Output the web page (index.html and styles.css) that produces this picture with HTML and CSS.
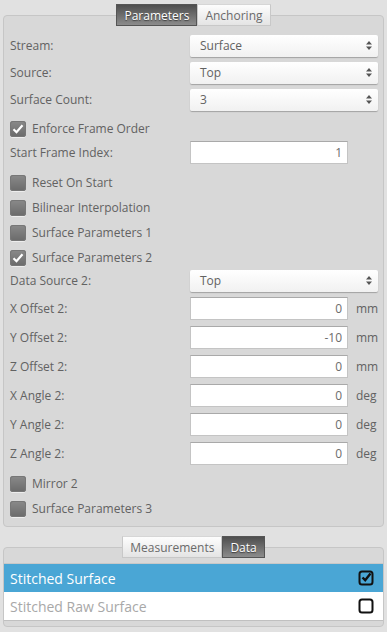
FILE: index.html
```html
<!DOCTYPE html>
<html lang="en">
<head>
    <meta charset="UTF-8">
    <meta name="viewport" content="width=device-width, initial-scale=1.0">
    <title>Stitch Tool</title>
    <link rel="stylesheet" href="styles.css">
</head>
<body>
    <div class="panel params">
        <div class="tabs">
            <span class="tab active">Parameters</span>
            <span class="tab">Anchoring</span>
        </div>

        <div class="row sel-row">
            <span class="label">Stream:</span>
            <div class="select"><span>Surface</span><svg class="arrows" width="6" height="9" viewBox="0 0 6 9"><path d="M3 0 L6 3.5 H0 Z M0 5.5 H6 L3 9 Z" fill="#555"/></svg></div>
        </div>
        <div class="row sel-row">
            <span class="label">Source:</span>
            <div class="select"><span>Top</span><svg class="arrows" width="6" height="9" viewBox="0 0 6 9"><path d="M3 0 L6 3.5 H0 Z M0 5.5 H6 L3 9 Z" fill="#555"/></svg></div>
        </div>
        <div class="row sel-row">
            <span class="label">Surface Count:</span>
            <div class="select"><span>3</span><svg class="arrows" width="6" height="9" viewBox="0 0 6 9"><path d="M3 0 L6 3.5 H0 Z M0 5.5 H6 L3 9 Z" fill="#555"/></svg></div>
        </div>

        <div class="row chk-row">
            <span class="box"><svg width="16" height="16" viewBox="0 0 16 16"><path d="M3.5 8.2 L6.5 11.2 L12.5 4.2" fill="none" stroke="#fff" stroke-width="2.2"/></svg></span>
            <span class="chk-label">Enforce Frame Order</span>
        </div>

        <div class="row in-row">
            <span class="label">Start Frame Index:</span>
            <input class="field" type="text" value="1">
        </div>

        <div class="row chk-row">
            <span class="box"></span>
            <span class="chk-label">Reset On Start</span>
        </div>
        <div class="row chk-row">
            <span class="box"></span>
            <span class="chk-label">Bilinear Interpolation</span>
        </div>
        <div class="row chk-row">
            <span class="box"></span>
            <span class="chk-label">Surface Parameters 1</span>
        </div>
        <div class="row chk-row">
            <span class="box"><svg width="16" height="16" viewBox="0 0 16 16"><path d="M3.5 8.2 L6.5 11.2 L12.5 4.2" fill="none" stroke="#fff" stroke-width="2.2"/></svg></span>
            <span class="chk-label">Surface Parameters 2</span>
        </div>

        <div class="row sel-row">
            <span class="label">Data Source 2:</span>
            <div class="select"><span>Top</span><svg class="arrows" width="6" height="9" viewBox="0 0 6 9"><path d="M3 0 L6 3.5 H0 Z M0 5.5 H6 L3 9 Z" fill="#555"/></svg></div>
        </div>

        <div class="row in-row">
            <span class="label">X Offset 2:</span>
            <input class="field" type="text" value="0">
            <span class="unit">mm</span>
        </div>
        <div class="row in-row">
            <span class="label">Y Offset 2:</span>
            <input class="field" type="text" value="-10">
            <span class="unit">mm</span>
        </div>
        <div class="row in-row">
            <span class="label">Z Offset 2:</span>
            <input class="field" type="text" value="0">
            <span class="unit">mm</span>
        </div>
        <div class="row in-row">
            <span class="label">X Angle 2:</span>
            <input class="field" type="text" value="0">
            <span class="unit">deg</span>
        </div>
        <div class="row in-row">
            <span class="label">Y Angle 2:</span>
            <input class="field" type="text" value="0">
            <span class="unit">deg</span>
        </div>
        <div class="row in-row">
            <span class="label">Z Angle 2:</span>
            <input class="field" type="text" value="0">
            <span class="unit">deg</span>
        </div>

        <div class="row chk-row">
            <span class="box"></span>
            <span class="chk-label">Mirror 2</span>
        </div>
        <div class="row chk-row">
            <span class="box"></span>
            <span class="chk-label">Surface Parameters 3</span>
        </div>
    </div>

    <div class="panel outputs">
        <div class="tabs">
            <span class="tab">Measurements</span>
            <span class="tab active">Data</span>
        </div>
        <div class="list">
            <div class="item selected">
                <span>Stitched Surface</span>
                <svg width="16" height="16" viewBox="0 0 16 16"><rect x="1.5" y="1.5" width="13" height="13" rx="2.5" fill="none" stroke="#111" stroke-width="2"/><path d="M4.5 7.5 L7.2 10.2 L12.5 3.5" fill="none" stroke="#111" stroke-width="2.4"/></svg>
            </div>
            <div class="item">
                <span>Stitched Raw Surface</span>
                <svg width="16" height="16" viewBox="0 0 16 16"><rect x="1.5" y="1.5" width="13" height="13" rx="2.5" fill="none" stroke="#111" stroke-width="2"/></svg>
            </div>
        </div>
    </div>
</body>
</html>
```

FILE: styles.css
```css
body {
    margin: 0;
    background: #e1e1e1;
    font-family: "Open Sans", "Liberation Sans", sans-serif;
    font-size: 12px;
    color: #626262;
}
.panel {
    margin: 15px 3px 0 3px;
    border: 1px solid #c6c6c6;
    border-radius: 4px;
    background: #d8d8d8;
    padding: 0 5px 8px 5px;
}
.tabs {
    display: flex;
    justify-content: center;
    margin-top: -12px;
    height: 22px;
}
.tab {
    padding: 0 7px;
    line-height: 21px;
    font-size: 12px;
    color: #6a6a6a;
    background: linear-gradient(#fdfdfd, #e4e4e4);
    border: 1px solid #c8c8c8;
    border-top-color: #d6d6d6;
}
.tab.active {
    color: #fff;
    background: linear-gradient(#4e4e4e, #8c8c8c);
    border-color: #555;
    text-shadow: 0 1px 1px rgba(0, 0, 0, 0.5);
}
.params .tabs {
    margin-bottom: 6px;
}
.row {
    display: flex;
    align-items: center;
}
.label {
    width: 180px;
    flex: none;
    padding-left: 1px;
}
.sel-row {
    height: 27px;
}
.select {
    width: 188px;
    height: 22px;
    box-sizing: border-box;
    display: flex;
    align-items: center;
    justify-content: space-between;
    padding: 0 6px 0 10px;
    background: linear-gradient(#ffffff, #f1f1f1);
    border-radius: 2px;
    box-shadow: 0 1px 1px rgba(0, 0, 0, 0.25);
}
.chk-row {
    height: 25px;
    padding-top: 6px;
    box-sizing: border-box;
}
.box {
    width: 16px;
    height: 16px;
    flex: none;
    margin-left: 1px;
    border-radius: 3px;
    background: linear-gradient(#8a8a8a, #6a6a6a);
    box-shadow: inset 0 0 0 1px #777, 0 1px 0 #eee;
}
.box svg {
    display: block;
}
.chk-label {
    margin-left: 6px;
}
.in-row {
    height: 29px;
}
.field {
    width: 158px;
    height: 23px;
    box-sizing: border-box;
    margin: 0;
    border: 1px solid #c4c4c4;
    border-top-color: #a9a9a9;
    background: #fff;
    text-align: right;
    padding: 0 5px;
    font-family: "Open Sans", "Liberation Sans", sans-serif;
    font-size: 12px;
    color: #6c6c6c;
}
.unit {
    margin-left: 8px;
}
.outputs {
    margin-top: 20px;
    padding: 0 0 5px 0;
}
.outputs .tabs {
    margin-bottom: 5px;
}
.list {
    border-top: 1px solid #c8c8c8;
    border-bottom: 1px solid #c0c0c0;
}
.item {
    height: 28px;
    display: flex;
    align-items: center;
    justify-content: space-between;
    padding: 0 9px 0 6px;
    background: #fff;
    font-size: 14px;
    color: #a8a8a8;
}
.item.selected {
    background: #4aa6d5;
    color: #fff;
}
```
